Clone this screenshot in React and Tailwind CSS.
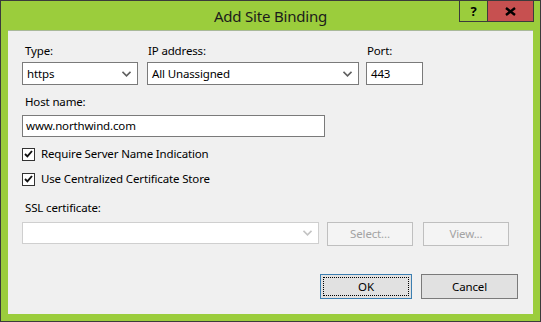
import React from "react";

const FONT = { fontFamily: '"Noto Sans", "Open Sans", sans-serif' };

// small down chevron used by the combo boxes
function Chevron({ disabled }) {
  return (
    <svg width="9" height="6" viewBox="0 0 9 6" className="shrink-0">
      <polyline
        points="0.5,0.8 4.5,4.8 8.5,0.8"
        fill="none"
        stroke={disabled ? "#c4c4c4" : "#606060"}
        strokeWidth="1.6"
      />
    </svg>
  );
}

function Combo({ value, className, disabled }) {
  return (
    <div
      className={`flex items-center bg-white border pl-[4px] pr-[6px] ${
        disabled ? "border-[#cfcfcf]" : "border-[#7a7a7a]"
      } ${className}`}
    >
      <span className="flex-1 text-[11.5px] tracking-[-0.15px] leading-none text-black">{value}</span>
      <Chevron disabled={disabled} />
    </div>
  );
}

function Check({ label, className }) {
  return (
    <div className={`flex items-center ${className}`}>
      <div className="w-[13px] h-[13px] border border-[#333333] bg-white flex items-center justify-center">
        <svg width="9" height="8" viewBox="0 0 9 8">
          <polyline points="1,4 3.4,6.4 8,1" fill="none" stroke="#111" strokeWidth="1.9" />
        </svg>
      </div>
      <span className="ml-[6px] text-[11.5px] tracking-[-0.15px] leading-[16px] text-black">{label}</span>
    </div>
  );
}

export default function App() {
  return (
    <div
      className="relative w-[541px] h-[322px] bg-[#9bcd3c] border border-[#3b3b3b] flex flex-col"
      style={FONT}
    >
      {/* caption */}
      <div className="h-[29px] flex items-center justify-center">
        <span className="text-[15px] tracking-[-0.2px] text-[#1b1b1b] mt-[1px]">Add Site Binding</span>
      </div>

      {/* caption buttons */}
      <div className="absolute top-[-1px] right-[6px] flex h-[22px] border border-[#3b3b3b]">
        <div className="w-[28px] border-r border-[#3b3b3b] flex items-center justify-center">
          <span className="text-[13px] font-bold text-black leading-none">?</span>
        </div>
        <div className="w-[45px] bg-[#c75050] flex items-center justify-center">
          <svg width="11" height="9" viewBox="0 0 11 9">
            <path d="M1 1 L10 8 M10 1 L1 8" stroke="#000" strokeWidth="2.4" />
          </svg>
        </div>
      </div>

      {/* client area */}
      <div className="ml-[7px] w-[525px] h-[284px] bg-[#f0f0f0] border-t border-[#a9b99a] flex flex-col px-[14px] text-[11.5px] tracking-[-0.15px]">
        {/* row 1: type / ip / port */}
        <div className="flex mt-[12px]">
          <div className="flex flex-col w-[116px]">
            <span className="leading-[16px] ml-[3px] text-black">Type:</span>
            <Combo value="https" className="mt-[3px] h-[23px]" />
          </div>
          <div className="flex flex-col w-[212px] ml-[9px]">
            <span className="leading-[16px] ml-[1px] text-black">IP address:</span>
            <Combo value="All Unassigned" className="mt-[3px] h-[23px]" />
          </div>
          <div className="flex flex-col w-[57px] ml-[7px]">
            <span className="leading-[16px] ml-[1px] text-black">Port:</span>
            <div className="mt-[3px] h-[23px] bg-white border border-[#7a7a7a] flex items-center pl-[4px] text-black">
              443
            </div>
          </div>
        </div>

        {/* host name */}
        <span className="leading-[16px] ml-[3px] mt-[9px] text-black">Host name:</span>
        <div className="mt-[5px] w-[303px] h-[22px] bg-white border border-[#7a7a7a] flex items-center pl-[3px] text-black">
          www.northwind.com
        </div>

        <Check label="Require Server Name Indication" className="mt-[9px]" />
        <Check label="Use Centralized Certificate Store" className="mt-[9px]" />

        {/* ssl certificate */}
        <span className="leading-[16px] ml-[3px] mt-[13px] text-black">SSL certificate:</span>
        <div className="flex items-start mt-[6px]">
          <Combo value="" disabled className="w-[297px] h-[22px]" />
          <div className="ml-[8px] w-[86px] h-[24px] border border-[#bfbfbf] bg-[#f4f4f4] flex items-center justify-center text-[#a3a3a3]">
            Select...
          </div>
          <div className="ml-[10px] w-[86px] h-[24px] border border-[#bfbfbf] bg-[#f4f4f4] flex items-center justify-center text-[#a3a3a3]">
            View...
          </div>
        </div>

        {/* dialog buttons */}
        <div className="flex justify-end mt-[28px] mr-[1px]">
          <div className="w-[92px] h-[25px] border border-[#3c7fb1] bg-[#e1e1e1] p-[2px]">
            <div className="w-full h-full border border-dotted border-black flex items-center justify-center text-black">
              OK
            </div>
          </div>
          <div className="ml-[9px] w-[97px] h-[25px] border border-[#7a7a7a] bg-[#e1e1e1] flex items-center justify-center text-black">
            Cancel
          </div>
        </div>
      </div>
    </div>
  );
}
